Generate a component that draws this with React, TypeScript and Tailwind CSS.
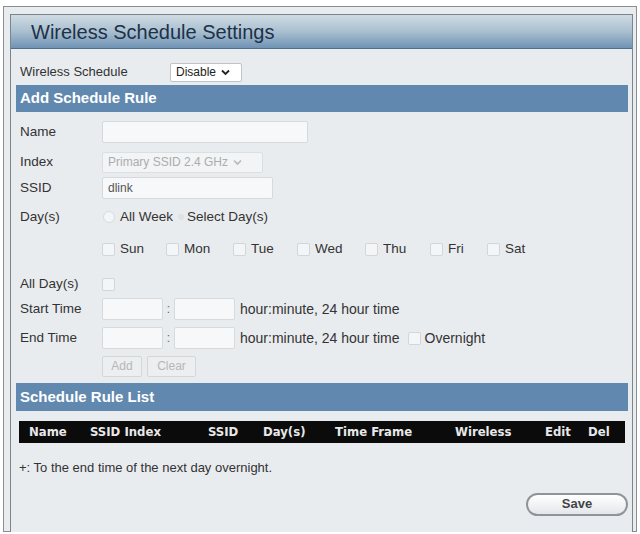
import React from "react";

const font = { fontFamily: '"Liberation Sans", Arial, sans-serif' };

function Box({ w, text, disabled }: { w: string; text?: string; disabled?: boolean }) {
  return (
    <div className={`${w} h-[22px] bg-[#f7f8f9] border border-[#d6dadd] rounded-[2px] flex items-center px-[5px] text-[12px] ${disabled ? "text-[#a9adb0]" : "text-[#555]"}`}>
      {text}
    </div>
  );
}

function Check({ className = "" }: { className?: string }) {
  return <span className={`inline-block w-[13px] h-[13px] bg-[#f4f5f6] border border-[#d2d6d9] rounded-[2px] ${className}`} />;
}

function Radio() {
  return <span className="inline-block w-[12px] h-[12px] rounded-full bg-[#f4f5f6] border border-[#d8dbde]" />;
}

function Row({ label, children, h, mt }: { label: string; children?: React.ReactNode; h: string; mt?: string }) {
  return (
    <div className={`flex items-center ${h} ${mt ?? ""}`}>
      <div className="w-[86px] pl-[4px] text-[13.5px] text-[#333]">{label}</div>
      {children}
    </div>
  );
}

export default function App() {
  const days: [string, string][] = [
    ["Sun", "w-[64px]"],
    ["Mon", "w-[67px]"],
    ["Tue", "w-[64px]"],
    ["Wed", "w-[68px]"],
    ["Thu", "w-[65px]"],
    ["Fri", "w-[57px]"],
    ["Sat", "w-[40px]"],
  ];
  return (
    <div className="w-[640px] h-[534px] bg-white pt-[6px] pl-[3px] pr-[3px]" style={font}>
      <div className="h-[526px] border border-[#8a8f93] bg-[#e9ecef] pt-[7px] pl-[6px] pr-[3px]">
        <div className="h-[518px] border-l border-r border-t border-[#7d858c] bg-[#e9ecef]">
          <div className="h-[34px] bg-gradient-to-b from-[#cfdbe3] via-[#a9bfd0] to-[#6f93b4] border-b border-[#4f6f8c] flex items-center pl-[20px]">
            <span className="text-[20px] text-[#1d3148] leading-none">Wireless Schedule Settings</span>
          </div>
          <div className="pl-[5px] pr-[4px]">
            <div className="flex items-center h-[22px] mt-[12px]">
              <div className="w-[154px] pl-[4px] text-[13px] text-[#333]">Wireless Schedule</div>
              <div className="w-[72px] h-[19px] bg-white border border-[#bfc4c8] rounded-[2px] flex items-center pl-[5px] text-[12px] text-[#222]">
                Disable
                <svg className="ml-[5px]" width="9" height="7" viewBox="0 0 9 7"><path d="M1 1.5 L4.5 5 L8 1.5" stroke="#222" strokeWidth="1.8" fill="none" /></svg>
              </div>
            </div>
            <div className="h-[27px] mt-[2px] bg-[#6189b0] flex items-center pl-[4px]">
              <span className="text-[15px] font-bold text-white">Add Schedule Rule</span>
            </div>
            <div className="pt-[5px]">
              <Row label="Name" h="h-[30px]">
                <Box w="w-[206px]" />
              </Row>
              <Row label="Index" h="h-[30px]">
                <div className="w-[161px] h-[21px] bg-[#f3f4f5] border border-[#dcdfe2] rounded-[2px] flex items-center pl-[5px] text-[12px] text-[#a9adb0]">
                  Primary SSID 2.4 GHz
                  <svg className="ml-[5px]" width="9" height="7" viewBox="0 0 9 7"><path d="M1 1.5 L4.5 5 L8 1.5" stroke="#b5b9bc" strokeWidth="1.6" fill="none" /></svg>
                </div>
              </Row>
              <Row label="SSID" h="h-[22px]">
                <Box w="w-[171px]" text="dlink" />
              </Row>
              <Row label="Day(s)" h="h-[36px]">
                <div className="flex items-center text-[13.5px] text-[#333]">
                  <span className="ml-[1px] flex"><Radio /></span>
                  <span className="ml-[5px]">All Week</span>
                  <span className="ml-[5px] inline-block w-[6px] h-[6px] rounded-full bg-[#dfe2e4]" />
                  <span className="ml-[3px]">Select Day(s)</span>
                </div>
              </Row>
              <Row label="" h="h-[28px]">
                <div className="flex items-center text-[13.5px] text-[#333]">
                  {days.map(([d, w]) => (
                    <div key={d} className={`flex items-center ${w}`}>
                      <Check className="mr-[5px]" />
                      <span>{d}</span>
                    </div>
                  ))}
                </div>
              </Row>
              <Row label="All Day(s)" h="h-[24px]" mt="mt-[9px]">
                <Check />
              </Row>
              <Row label="Start Time" h="h-[26px]">
                <Box w="w-[61px]" />
                <span className="w-[11px] text-center text-[12px] text-[#666]">:</span>
                <Box w="w-[61px]" />
                <span className="ml-[5px] text-[14px] text-[#333]">hour:minute, 24 hour time</span>
              </Row>
              <Row label="End Time" h="h-[32px]">
                <Box w="w-[61px]" />
                <span className="w-[11px] text-center text-[12px] text-[#666]">:</span>
                <Box w="w-[61px]" />
                <span className="ml-[5px] text-[14px] text-[#333]">hour:minute, 24 hour time</span>
                <Check className="ml-[8px]" />
                <span className="ml-[4px] text-[14px] text-[#333]">Overnight</span>
              </Row>
              <Row label="" h="h-[24px]">
                <div className="w-[40px] h-[21px] border border-[#d3d7da] bg-[#eceef0] rounded-[2px] flex items-center justify-center text-[12px] text-[#b4b8bb]">Add</div>
                <div className="ml-[5px] w-[49px] h-[21px] border border-[#d3d7da] bg-[#eceef0] rounded-[2px] flex items-center justify-center text-[12px] text-[#b4b8bb]">Clear</div>
              </Row>
            </div>
            <div className="h-[28px] mt-[5px] bg-[#6189b0] flex items-center pl-[4px]">
              <span className="text-[15px] font-bold text-white">Schedule Rule List</span>
            </div>
            <div className="mx-[3px] mt-[10px] h-[22px] bg-[#0b0b0b] flex items-center text-[13px] font-bold text-[#e8e8e8]" style={{ fontFamily: '"DejaVu Sans Condensed", "Liberation Sans Narrow", sans-serif' }}>
              <span className="ml-[10px] w-[61px]">Name</span>
              <span className="w-[118px]">SSID Index</span>
              <span className="w-[55px]">SSID</span>
              <span className="w-[72px]">Day(s)</span>
              <span className="w-[120px]">Time Frame</span>
              <span className="w-[90px]">Wireless</span>
              <span className="w-[43px]">Edit</span>
              <span>Del</span>
            </div>
            <div className="mt-[15px] pl-[3px] text-[13px] text-[#333]">+: To the end time of the next day overnight.</div>
            <div className="flex justify-end mt-[15px]">
              <div className="w-[102px] h-[23px] rounded-full border-2 border-[#8e9499] bg-gradient-to-b from-[#ffffff] to-[#e4e7ea] flex items-center justify-center text-[13px] font-bold text-[#444]">Save</div>
            </div>
          </div>
        </div>
      </div>
    </div>
  );
}
